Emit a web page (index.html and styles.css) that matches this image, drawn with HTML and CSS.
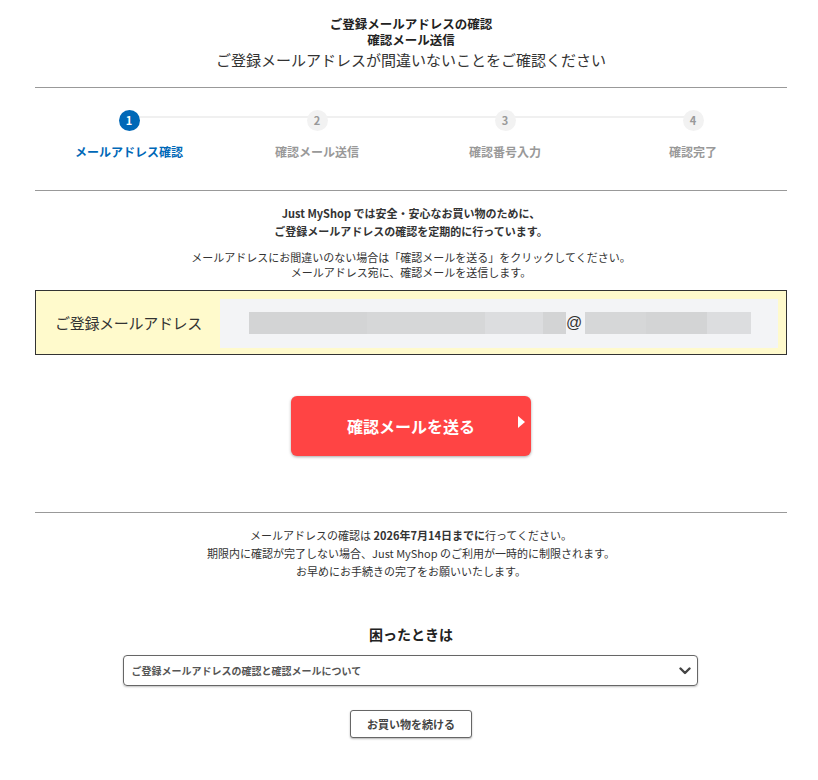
FILE: index.html
```html
<!DOCTYPE html>
<html lang="ja">
<head>
    <meta charset="UTF-8">
    <meta name="viewport" content="width=device-width, initial-scale=1.0">
    <title>ご登録メールアドレスの確認</title>
    <link rel="stylesheet" href="styles.css">
</head>
<body>
    <div class="container">
        <header class="page-header">
            <h1>ご登録メールアドレスの確認<br>確認メール送信</h1>
            <p>ご登録メールアドレスが間違いないことをご確認ください</p>
        </header>

        <!-- Steps -->
        <ol class="steps">
            <li class="step active"><span class="step-num">1</span><span class="step-label">メールアドレス確認</span></li>
            <li class="step"><span class="step-num">2</span><span class="step-label">確認メール送信</span></li>
            <li class="step"><span class="step-num">3</span><span class="step-label">確認番号入力</span></li>
            <li class="step"><span class="step-num">4</span><span class="step-label">確認完了</span></li>
        </ol>

        <section class="confirm">
            <p class="lead">Just MyShop では安全・安心なお買い物のために、<br>ご登録メールアドレスの確認を定期的に行っています。</p>
            <p class="note">メールアドレスにお間違いのない場合は「確認メールを送る」をクリックしてください。<br>メールアドレス宛に、確認メールを送信します。</p>

            <div class="address-box">
                <div class="address-label">ご登録メールアドレス</div>
                <div class="address-value">
                    <span class="blur" style="width:118px"></span><span class="blur b2" style="width:118px"></span><span class="blur b3" style="width:58px"></span><span class="blur" style="width:23px"></span><span class="at">@</span><span class="blur b2" style="width:61px"></span><span class="blur" style="width:61px"></span><span class="blur b3" style="width:44px"></span>
                </div>
            </div>

            <div class="send-wrap">
                <button type="button" class="btn-send">確認メールを送る</button>
            </div>
        </section>

        <section class="deadline">
            <p>メールアドレスの確認は <b>2026年7月14日までに</b>行ってください。<br>期限内に確認が完了しない場合、Just MyShop のご利用が一時的に制限されます。<br>お早めにお手続きの完了をお願いいたします。</p>
        </section>

        <section class="help">
            <h2>困ったときは</h2>
            <div class="help-select">
                <span>ご登録メールアドレスの確認と確認メールについて</span>
                <svg width="12" height="8" viewBox="0 0 12 8"><path d="M1.5 1.5 L6 6 L10.5 1.5" fill="none" stroke="#444" stroke-width="2.4" stroke-linecap="round" stroke-linejoin="round"/></svg>
            </div>
            <button type="button" class="btn-continue">お買い物を続ける</button>
        </section>
    </div>
</body>
</html>
```

FILE: styles.css
```css
body {
    margin: 0;
    padding: 0;
    background-color: #fff;
    color: #333;
    font-family: "Noto Sans CJK JP", "Noto Sans", sans-serif;
}

.container {
    width: 752px;
    margin: 0 0 0 35px;
}

p {
    margin: 0;
}

/* Header */
.page-header {
    text-align: center;
    padding-top: 16px;
    padding-bottom: 17px;
    border-bottom: 1px solid #999;
}

.page-header h1 {
    margin: 0 0 2px;
    font-size: 12.5px;
    line-height: 16px;
    font-weight: bold;
    color: #222;
}

.page-header p {
    font-size: 15px;
    line-height: 20px;
    color: #333;
}

/* Steps */
.steps {
    display: flex;
    list-style: none;
    margin: 0;
    padding: 22px 0 30px;
    border-bottom: 1px solid #999;
}

.step {
    flex: 1;
    display: flex;
    flex-direction: column;
    align-items: center;
    position: relative;
}

.step::after {
    content: '';
    position: absolute;
    top: 6px;
    left: 50%;
    width: 100%;
    height: 2px;
    background-color: #f0f0f0;
}

.step:last-child::after {
    display: none;
}

.step-num {
    width: 21px;
    height: 21px;
    border-radius: 50%;
    background-color: #f2f2f2;
    color: #999;
    font-size: 11px;
    font-weight: bold;
    line-height: 21px;
    text-align: center;
    position: relative;
    z-index: 1;
}

.step-label {
    margin-top: 13px;
    font-size: 12px;
    line-height: 16px;
    font-weight: bold;
    color: #999;
}

.step.active .step-num {
    background-color: #0068b7;
    color: #fff;
}

.step.active .step-label {
    color: #0068b7;
}

/* Confirm */
.confirm {
    text-align: center;
    padding-top: 13px;
    padding-bottom: 56px;
    border-bottom: 1px solid #999;
}

.lead {
    font-size: 11px;
    line-height: 18px;
    font-weight: bold;
    color: #333;
}

.note {
    margin-top: 10px;
    font-size: 11px;
    line-height: 15px;
    color: #333;
}

.address-box {
    display: flex;
    align-items: center;
    margin-top: 10px;
    height: 63px;
    border: 1px solid #333;
    background-color: #fffacc;
    text-align: left;
}

.address-label {
    width: 165px;
    padding-left: 19px;
    font-size: 15px;
    letter-spacing: -0.3px;
    color: #333;
}

.address-value {
    display: flex;
    align-items: center;
    height: 49px;
    width: 529px;
    padding-left: 29px;
    background-color: #f3f4f6;
    margin-top: 1px;
}

.blur {
    display: inline-block;
    height: 22px;
    background-color: #d3d4d5;
}

.blur.b2 {
    background-color: #d6d7d8;
}

.blur.b3 {
    background-color: #dcdddf;
}

.at {
    width: 19px;
    font-size: 16px;
    line-height: 22px;
    color: #333;
    font-family: "Liberation Sans", sans-serif;
}

.send-wrap {
    margin-top: 41px;
}

.btn-send {
    position: relative;
    width: 240px;
    height: 60px;
    border: none;
    border-radius: 6px;
    background-color: #ff4444;
    color: #fff;
    font-family: inherit;
    font-size: 16px;
    font-weight: bold;
    box-shadow: 0 1px 3px rgba(0, 0, 0, 0.35);
    cursor: pointer;
}

.btn-send::after {
    content: '';
    position: absolute;
    right: 6px;
    top: 20px;
    border-left: 7px solid #fff;
    border-top: 6px solid transparent;
    border-bottom: 6px solid transparent;
}

/* Deadline */
.deadline {
    text-align: center;
    padding-top: 13px;
}

.deadline p {
    font-size: 11px;
    line-height: 18px;
    color: #333;
}

.deadline b {
    font-weight: bold;
}

/* Help */
.help {
    display: flex;
    flex-direction: column;
    align-items: center;
    padding-top: 44px;
    padding-bottom: 40px;
}

.help h2 {
    margin: 0;
    font-size: 14px;
    line-height: 20px;
    font-weight: bold;
    color: #222;
}

.help-select {
    box-sizing: border-box;
    display: flex;
    align-items: center;
    justify-content: space-between;
    width: 575px;
    height: 31px;
    margin-top: 11px;
    margin-right: 2px;
    padding: 0 6px 0 8px;
    border: 1px solid #666;
    border-radius: 4px;
    box-shadow: 0 1px 2px rgba(0, 0, 0, 0.25);
    font-size: 10px;
    font-weight: bold;
    color: #555;
}

.btn-continue {
    box-sizing: border-box;
    width: 122px;
    height: 28px;
    margin-top: 24px;
    border: 1px solid #666;
    border-radius: 3px;
    background-color: #fff;
    box-shadow: 0 1px 2px rgba(0, 0, 0, 0.3);
    font-family: inherit;
    font-size: 11px;
    font-weight: bold;
    color: #444;
    cursor: pointer;
}
```
